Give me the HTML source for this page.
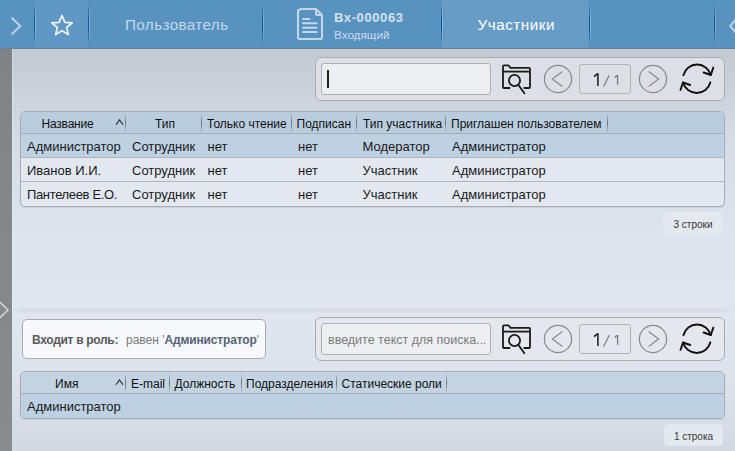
<!DOCTYPE html>
<html><head><meta charset="utf-8">
<style>
*{box-sizing:border-box;margin:0;padding:0}
html,body{width:735px;height:451px;overflow:hidden}
body{position:relative;font-family:"Liberation Sans",sans-serif;background:#dfe5ee}
.abs{position:absolute}
#hdr{left:0;top:0;width:735px;height:49px;background:#5893c0;border-bottom:1px solid #6f7c96}
.sep{position:absolute;top:2px;width:1px;height:44px;background:linear-gradient(to bottom,rgba(0,70,150,0),rgba(0,75,155,1) 50%,rgba(0,70,150,0));}
.sep::after{content:"";position:absolute;left:1px;top:0;width:1px;height:100%;background:linear-gradient(to bottom,rgba(255,255,255,0),rgba(255,255,255,.3) 50%,rgba(255,255,255,0))}
#left{left:0;top:49px;width:12px;height:402px;background:linear-gradient(to bottom,#7f8287,#84878c 50%,#888b90)}
#lhl{left:12px;top:49px;width:1px;height:402px;background:rgba(255,255,255,.25)}
#top{left:12px;top:49px;width:723px;height:259px;background:linear-gradient(to bottom,#c3c9d2 0px,#d6dce5 90px,#dfe5ee 200px,#e0e6ef 259px)}
#band{left:18px;top:308px;width:709px;height:5px;background:linear-gradient(to bottom,#dee3eb,#d9dee6 30%,#d9dee6 70%,#dee3eb)}
#bot{left:12px;top:313px;width:723px;height:138px;background:linear-gradient(to bottom,#e0e6ef 0px,#dde3ec 60px,#d3d9e2 138px)}
#band2{left:12px;top:308px;width:6px;height:5px;background:#dfe5ee}
#band3{left:727px;top:308px;width:8px;height:5px;background:#dfe5ee}
.panel{position:absolute;left:315px;width:410px;height:44px;border:1px solid #aaacb0;border-radius:6px;background:#dcdfe6}
.inp{position:absolute;left:5px;top:5px;width:170px;height:32px;border:1px solid #adb0b4;border-radius:3px;background:#eceef2}
.pg{position:absolute;left:263px;top:6px;width:52px;height:30px;border:1px solid #b0b2b6;border-radius:3px;background:transparent}
.pg .a{position:absolute;left:13px;top:5px;font-size:17px;color:#1a1a1a}
.pg .b{position:absolute;left:24px;top:9px;font-size:13px;color:#8a8a8a}
.tbl{position:absolute;left:20px;width:705px;border:1px solid #a8adb4;box-shadow:0 1px 1px rgba(0,0,0,.08);border-radius:5px;overflow:hidden;background:#e3e8f0}
.th{position:absolute;left:0;top:0;width:100%;height:22px;background:#bacddf;border-bottom:1px solid #a7adb4}
.th span{margin-left:1px;position:absolute;top:4.5px;font-size:12px;color:#111;white-space:nowrap}
.csep{margin-left:1px;position:absolute;top:1px;width:1px;height:20px;background:linear-gradient(to bottom,rgba(110,110,115,0),rgba(110,110,115,1) 50%,rgba(110,110,115,0))}
.row{position:absolute;left:0;width:100%;height:24px;border-bottom:1px solid #b0b5bc}
.row span{margin-left:1px;position:absolute;top:5px;font-size:13px;color:#1a1a1a;white-space:nowrap}
.sel{background:#bdd1e3}
.badge{position:absolute;height:22px;border-radius:5px;background:#e4e8ef;font-size:10px;color:#383838;text-align:center;line-height:25px}
</style></head><body>
<div id="hdr" class="abs">
  <div class="abs" style="left:35px;top:0;width:53px;height:48px;background:#6098c5"></div>
  <div class="abs" style="left:442px;top:0;width:147px;height:48px;background:#679cc7"></div>
  <div class="sep" style="left:34px"></div>
  <div class="sep" style="left:88px"></div>
  <div class="sep" style="left:262px"></div>
  <div class="sep" style="left:441px"></div>
  <div class="sep" style="left:589px"></div>
  <div class="sep" style="left:714px"></div>
  <svg class="abs" style="left:0;top:0" width="735" height="48">
    <polyline points="12.2,18.2 20.3,26 12.2,33.8" fill="none" stroke="#b8d0e6" stroke-width="2.1" stroke-linecap="round"/>
    <polygon points="62,15.5 64.9,22.3 72.2,22.8 66.6,27.5 68.4,34.6 62,30.7 55.6,34.6 57.4,27.5 51.8,22.8 59.1,22.3" fill="none" stroke="#eef4fa" stroke-width="1.7" stroke-linejoin="round"/>
    <polyline points="737,18 730.2,26 737,34" fill="none" stroke="#b8d0e6" stroke-width="2.1"/>
    <path d="M299.5,10 a1.5,1.5 0 0 1 1.5,-1 H316 L322,15 V37.5 a1.5,1.5 0 0 1 -1.5,1.5 H299.5 a1.5,1.5 0 0 1 -1.5,-1.5 V10.5Z" fill="none" stroke="#c4d8ea" stroke-width="2"/>
    <path d="M316,9 V14 a1,1 0 0 0 1,1 H322" fill="none" stroke="#c4d8ea" stroke-width="2"/>
    <g stroke="#c4d8ea" stroke-width="2" stroke-linecap="round">
      <line x1="303" y1="19" x2="309.5" y2="19"/>
      <line x1="303" y1="23.3" x2="316.5" y2="23.3"/>
      <line x1="303" y1="27.7" x2="316.5" y2="27.7"/>
      <line x1="303" y1="32" x2="316.5" y2="32"/>
    </g>
  </svg>
  <div class="abs" style="left:125px;top:15.5px;font-size:15.3px;letter-spacing:.35px;color:#c2d6e9;white-space:nowrap">Пользователь</div>
  <div class="abs" style="left:334px;top:10px;font-size:13px;letter-spacing:.6px;font-weight:bold;color:#d2e1ef;white-space:nowrap">Вх-000063</div>
  <div class="abs" style="left:334px;top:27.5px;font-size:11.7px;color:#c8dbec;white-space:nowrap">Входящий</div>
  <div class="abs" style="left:477.5px;top:15.5px;font-size:15.3px;letter-spacing:.5px;color:#fff;white-space:nowrap">Участники</div>
</div>
<div id="left" class="abs">
</div>
<svg class="abs" style="left:0;top:300px" width="12" height="20"><polyline points="-1,1.5 8,10 -1,18.5" fill="none" stroke="#d0d4d9" stroke-width="1.6"/></svg>
<div id="top" class="abs"></div>
<div id="lhl" class="abs"></div>
<div id="band" class="abs"></div>
<div id="bot" class="abs"></div>

<!-- panel 1 -->
<div class="panel" style="top:57px">
  <div class="inp" style="width:170px"><div class="abs" style="left:5px;top:6px;width:2px;height:18px;background:#222"></div></div>
  
  <div class="pg"></div>
</div>

<!-- table 1 -->
<div class="tbl" style="top:111px;height:96px">
  <div class="th">
    <span style="left:19.5px;letter-spacing:-.2px">Название</span>
    <div class="csep" style="left:103px"></div>
    <span style="left:133px">Тип</span>
    <div class="csep" style="left:179px"></div>
    <span style="left:185px">Только чтение</span>
    <div class="csep" style="left:269px"></div>
    <span style="left:274.5px">Подписан</span>
    <div class="csep" style="left:334px"></div>
    <span style="left:341px">Тип участника</span>
    <div class="csep" style="left:423px"></div>
    <span style="left:429px">Приглашен пользователем</span>
    <div class="csep" style="left:585px"></div>
  </div>
  <div class="row sel" style="top:22px">
    <span style="left:5px">Администратор</span><span style="left:110px">Сотрудник</span><span style="left:185.5px">нет</span><span style="left:276px">нет</span><span style="left:340.5px">Модератор</span><span style="left:430px">Администратор</span>
  </div>
  <div class="row" style="top:46px">
    <span style="left:5px">Иванов И.И.</span><span style="left:110px">Сотрудник</span><span style="left:185.5px">нет</span><span style="left:276px">нет</span><span style="left:340.5px">Участник</span><span style="left:430px">Администратор</span>
  </div>
  <div class="row" style="top:70px;border-bottom:0">
    <span style="left:5px;letter-spacing:-.35px">Пантелеев Е.О.</span><span style="left:110px">Сотрудник</span><span style="left:185.5px">нет</span><span style="left:276px">нет</span><span style="left:340.5px">Участник</span><span style="left:430px">Администратор</span>
  </div>
</div>
<div class="badge" style="left:663px;top:212px;width:60px">3 строки</div>

<!-- filter -->
<div class="abs" style="left:22px;top:319px;width:244px;height:40px;border:1px solid #a9abae;border-radius:5px;background:#f7f8fb">
  <span class="abs" style="left:9px;top:13px;font-size:12px;letter-spacing:-.3px;font-weight:bold;color:#5a5a5a;white-space:nowrap">Входит в роль:</span>
  <span class="abs" style="left:103px;top:13px;font-size:12px;color:#7a7a7a;white-space:nowrap">равен '<b style="color:#566576;letter-spacing:-.15px">Администратор</b>'</span>
</div>

<!-- panel 2 -->
<div class="panel" style="top:317px;background:#e4e7ee">
  <div class="inp"><span class="abs" style="left:6px;top:9px;font-size:12.5px;color:#7c7c7c;white-space:nowrap">введите текст для поиска...</span></div>
  <div class="pg"></div>
</div>

<!-- table 2 -->
<div class="tbl" style="top:371px;height:48px;background:#bdd1e3">
  <div class="th" style="background:#c3d3e2">
    <span style="left:33px">Имя</span>
    <div class="csep" style="left:103px"></div>
    <span style="left:109px">E-mail</span>
    <div class="csep" style="left:147px"></div>
    <span style="left:152.5px">Должность</span>
    <div class="csep" style="left:219px"></div>
    <span style="left:224px">Подразделения</span>
    <div class="csep" style="left:314px"></div>
    <span style="left:319.5px">Статические роли</span>
    <div class="csep" style="left:424px"></div>
  </div>
  <div class="row sel" style="top:22px;border-bottom:0">
    <span style="left:5px">Администратор</span>
  </div>
</div>
<div class="badge" style="left:664px;top:424px;width:59px">1 строка</div>
<svg class="abs" style="left:0;top:0;pointer-events:none" width="735" height="451"><g transform="translate(0,0)">
  <g fill="none" stroke="#1a1a1a" stroke-width="1.8" stroke-linejoin="round" stroke-linecap="butt">
    <path d="M510.2,88 H504 a1,1 0 0 1 -1,-1 V66.4 a1,1 0 0 1 1,-1 H508.4 L510.6,67.8 H529 a1,1 0 0 1 1,1 V87 a1,1 0 0 1 -1,1 H523.6"/>
    <path d="M503,71.6 H530"/>
    <circle cx="514.5" cy="80.5" r="5.6"/>
    <path d="M518.4,85 L524.4,93.2" stroke-linecap="round"/>
  </g>
  <g fill="none" stroke="#8a8a8a" stroke-width="1.25">
    <circle cx="558" cy="79" r="13.6"/>
    <polyline points="562.4,71.6 552.4,79 562.4,86.4"/>
    <circle cx="653" cy="79" r="13.6"/>
    <polyline points="648.6,71.6 658.6,79 648.6,86.4"/>
  </g>
  <g fill="none" stroke="#111" stroke-width="1.9" stroke-linecap="round" stroke-linejoin="round">
    <path d="M683.4,75.2 A14.15,14.15 0 0 1 710.8,75"/>
    <path d="M703.6,72.5 L710.8,75 L713.3,67.6"/>
    <path d="M710.4,82.3 A14.15,14.15 0 0 1 683,82.5"/>
    <path d="M690.2,85 L683,82.5 L680.5,89.9"/>
  </g>
</g>
<g transform="translate(0,260)">
  <g fill="none" stroke="#1a1a1a" stroke-width="1.8" stroke-linejoin="round" stroke-linecap="butt">
    <path d="M510.2,88 H504 a1,1 0 0 1 -1,-1 V66.4 a1,1 0 0 1 1,-1 H508.4 L510.6,67.8 H529 a1,1 0 0 1 1,1 V87 a1,1 0 0 1 -1,1 H523.6"/>
    <path d="M503,71.6 H530"/>
    <circle cx="514.5" cy="80.5" r="5.6"/>
    <path d="M518.4,85 L524.4,93.2" stroke-linecap="round"/>
  </g>
  <g fill="none" stroke="#8a8a8a" stroke-width="1.25">
    <circle cx="558" cy="79" r="13.6"/>
    <polyline points="562.4,71.6 552.4,79 562.4,86.4"/>
    <circle cx="653" cy="79" r="13.6"/>
    <polyline points="648.6,71.6 658.6,79 648.6,86.4"/>
  </g>
  <g fill="none" stroke="#111" stroke-width="1.9" stroke-linecap="round" stroke-linejoin="round">
    <path d="M683.4,75.2 A14.15,14.15 0 0 1 710.8,75"/>
    <path d="M703.6,72.5 L710.8,75 L713.3,67.6"/>
    <path d="M710.4,82.3 A14.15,14.15 0 0 1 683,82.5"/>
    <path d="M690.2,85 L683,82.5 L680.5,89.9"/>
  </g>
</g>
<g transform="translate(0,0)" fill="none" stroke-linecap="butt">
  <path d="M597.9,73.2 V85.9 M594,76.6 L597.6,73.6" stroke="#1a1a1a" stroke-width="1.5"/>
  <path d="M603.6,86.5 L609.2,75.2" stroke="#7a7a7a" stroke-width="1.2"/>
  <path d="M617.6,75 V84.8 M614.5,77.6 L617.3,75.3" stroke="#7a7a7a" stroke-width="1.3"/>
</g>
<g transform="translate(0,260)" fill="none" stroke-linecap="butt">
  <path d="M597.9,73.2 V85.9 M594,76.6 L597.6,73.6" stroke="#1a1a1a" stroke-width="1.5"/>
  <path d="M603.6,86.5 L609.2,75.2" stroke="#7a7a7a" stroke-width="1.2"/>
  <path d="M617.6,75 V84.8 M614.5,77.6 L617.3,75.3" stroke="#7a7a7a" stroke-width="1.3"/>
</g>
<g fill="none" stroke="#222" stroke-width="1.1">
  <polyline points="116,124.8 119.5,120 123,124.8"/>
  <polyline points="116,384.8 119.5,380 123,384.8"/>
</g></svg>
</body></html>
